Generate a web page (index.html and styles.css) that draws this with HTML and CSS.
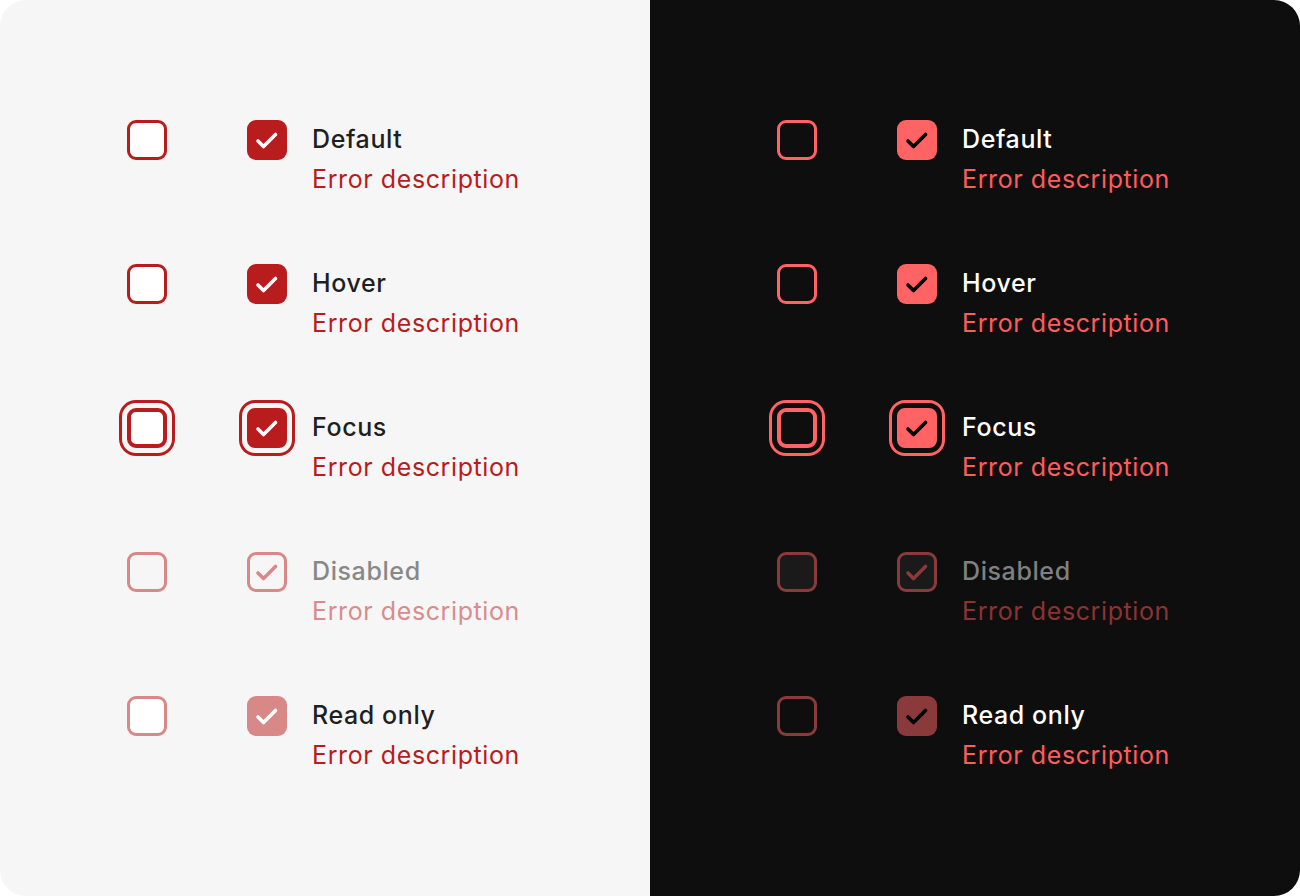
FILE: index.html
```html
<!DOCTYPE html>
<html lang="en">
<head>
<meta charset="utf-8">
<title>Checkbox error states</title>
<link rel="stylesheet" href="styles.css">
</head>
<body>
<div class="frame">
  <section class="panel light">
    <div class="row">
      <span class="box"></span>
      <div class="item">
        <span class="box checked"><svg viewBox="0 0 40 40"><polyline points="11,21 16.5,26.5 28.5,14.5"/></svg></span>
        <div class="text"><div class="label">Default</div><div class="error">Error description</div></div>
      </div>
    </div>
    <div class="row">
      <span class="box"></span>
      <div class="item">
        <span class="box checked"><svg viewBox="0 0 40 40"><polyline points="11,21 16.5,26.5 28.5,14.5"/></svg></span>
        <div class="text"><div class="label">Hover</div><div class="error">Error description</div></div>
      </div>
    </div>
    <div class="row focus">
      <span class="box"></span>
      <div class="item">
        <span class="box checked"><svg viewBox="0 0 40 40"><polyline points="11,21 16.5,26.5 28.5,14.5"/></svg></span>
        <div class="text"><div class="label">Focus</div><div class="error">Error description</div></div>
      </div>
    </div>
    <div class="row disabled">
      <span class="box"></span>
      <div class="item">
        <span class="box checked"><svg viewBox="0 0 40 40"><polyline points="11,21 16.5,26.5 28.5,14.5"/></svg></span>
        <div class="text"><div class="label">Disabled</div><div class="error">Error description</div></div>
      </div>
    </div>
    <div class="row readonly">
      <span class="box"></span>
      <div class="item">
        <span class="box checked"><svg viewBox="0 0 40 40"><polyline points="11,21 16.5,26.5 28.5,14.5"/></svg></span>
        <div class="text"><div class="label">Read only</div><div class="error">Error description</div></div>
      </div>
    </div>
  </section>
  <section class="panel dark">
    <div class="row">
      <span class="box"></span>
      <div class="item">
        <span class="box checked"><svg viewBox="0 0 40 40"><polyline points="11,21 16.5,26.5 28.5,14.5"/></svg></span>
        <div class="text"><div class="label">Default</div><div class="error">Error description</div></div>
      </div>
    </div>
    <div class="row">
      <span class="box"></span>
      <div class="item">
        <span class="box checked"><svg viewBox="0 0 40 40"><polyline points="11,21 16.5,26.5 28.5,14.5"/></svg></span>
        <div class="text"><div class="label">Hover</div><div class="error">Error description</div></div>
      </div>
    </div>
    <div class="row focus">
      <span class="box"></span>
      <div class="item">
        <span class="box checked"><svg viewBox="0 0 40 40"><polyline points="11,21 16.5,26.5 28.5,14.5"/></svg></span>
        <div class="text"><div class="label">Focus</div><div class="error">Error description</div></div>
      </div>
    </div>
    <div class="row disabled">
      <span class="box"></span>
      <div class="item">
        <span class="box checked"><svg viewBox="0 0 40 40"><polyline points="11,21 16.5,26.5 28.5,14.5"/></svg></span>
        <div class="text"><div class="label">Disabled</div><div class="error">Error description</div></div>
      </div>
    </div>
    <div class="row readonly">
      <span class="box"></span>
      <div class="item">
        <span class="box checked"><svg viewBox="0 0 40 40"><polyline points="11,21 16.5,26.5 28.5,14.5"/></svg></span>
        <div class="text"><div class="label">Read only</div><div class="error">Error description</div></div>
      </div>
    </div>
  </section>
</div>
</body>
</html>
```
FILE: styles.css
```css
html, body {
  margin: 0;
  padding: 0;
  background: #ffffff;
}

.frame {
  display: flex;
  width: 1300px;
  height: 896px;
  border-radius: 26px;
  overflow: hidden;
  font-family: Inter, "Noto Sans", sans-serif;
}

.panel {
  flex: 1;
  display: flex;
  flex-direction: column;
  gap: 64px;
  padding: 120px 0 0 127px;
  box-sizing: border-box;
}

.light {
  background: #f6f6f6;
  --accent: #b91c1c;
  --inner: #ffffff;
  --check: #ffffff;
  --label: #1f1f1f;
  --error: #b91c1c;
  --bg: #f6f6f6;
  --dis-accent: #d98888;
  --dis-inner: #f6f6f6;
  --dis-check: #d98888;
  --dis-label: #888888;
  --dis-error: #da8b8b;
  --ro-accent: #d98888;
  --ro-inner: #ffffff;
  --ro-check: #ffffff;
}

.dark {
  background: #0e0e0e;
  --accent: #ff6363;
  --inner: #0e0e0e;
  --check: #000000;
  --label: #ffffff;
  --error: #ff5c5c;
  --bg: #0e0e0e;
  --dis-accent: #8a3a3a;
  --dis-inner: #1a1a1a;
  --dis-check: #8a3a3a;
  --dis-label: #808080;
  --dis-error: #8c3232;
  --ro-accent: #8a3a3a;
  --ro-inner: #0e0e0e;
  --ro-check: #000000;
}

.row {
  display: flex;
  align-items: flex-start;
  height: 80px;
}

.item {
  display: flex;
  align-items: flex-start;
  gap: 25px;
  margin-left: 80px;
}

.box {
  box-sizing: border-box;
  width: 40px;
  height: 40px;
  flex: none;
  border: 3px solid var(--accent);
  border-radius: 9px;
  background: var(--inner);
  display: flex;
  align-items: center;
  justify-content: center;
}

.box.checked {
  background: var(--accent);
  border: none;
}

.box svg {
  width: 40px;
  height: 40px;
  display: block;
}

.box polyline {
  fill: none;
  stroke: var(--check);
  stroke-width: 3.6;
  stroke-linecap: round;
  stroke-linejoin: round;
}

.text {
  display: flex;
  flex-direction: column;
  margin-top: -1px;
}

.label {
  font-size: 25px;
  font-weight: 500;
  line-height: 40px;
  letter-spacing: 0.6px;
  color: var(--label);
}

.error {
  font-size: 25px;
  font-weight: 400;
  line-height: 40px;
  letter-spacing: 0.6px;
  color: var(--error);
}

/* focus */
.focus .box {
  border-width: 4px;
  box-shadow: 0 0 0 5px var(--bg), 0 0 0 8px var(--accent);
}

.focus .box.checked {
  border: 4px solid var(--bg);
  box-shadow: 0 0 0 1px var(--bg), 0 0 0 4px var(--accent);
  width: 48px;
  height: 48px;
  margin: -4px;
  border-radius: 12px;
}

/* disabled */
.disabled .box {
  border-color: var(--dis-accent);
  background: var(--dis-inner);
}

.disabled .box.checked {
  border: 3px solid var(--dis-accent);
  background: var(--dis-inner);
}

.disabled .box.checked svg {
  margin: -3px;
}

.disabled .box polyline {
  stroke: var(--dis-check);
}

.disabled .label {
  color: var(--dis-label);
}

.disabled .error {
  color: var(--dis-error);
}

/* read only */
.readonly .box {
  border-color: var(--ro-accent);
  background: var(--ro-inner);
}

.readonly .box.checked {
  background: var(--ro-accent);
}

.readonly .box polyline {
  stroke: var(--ro-check);
}
```
